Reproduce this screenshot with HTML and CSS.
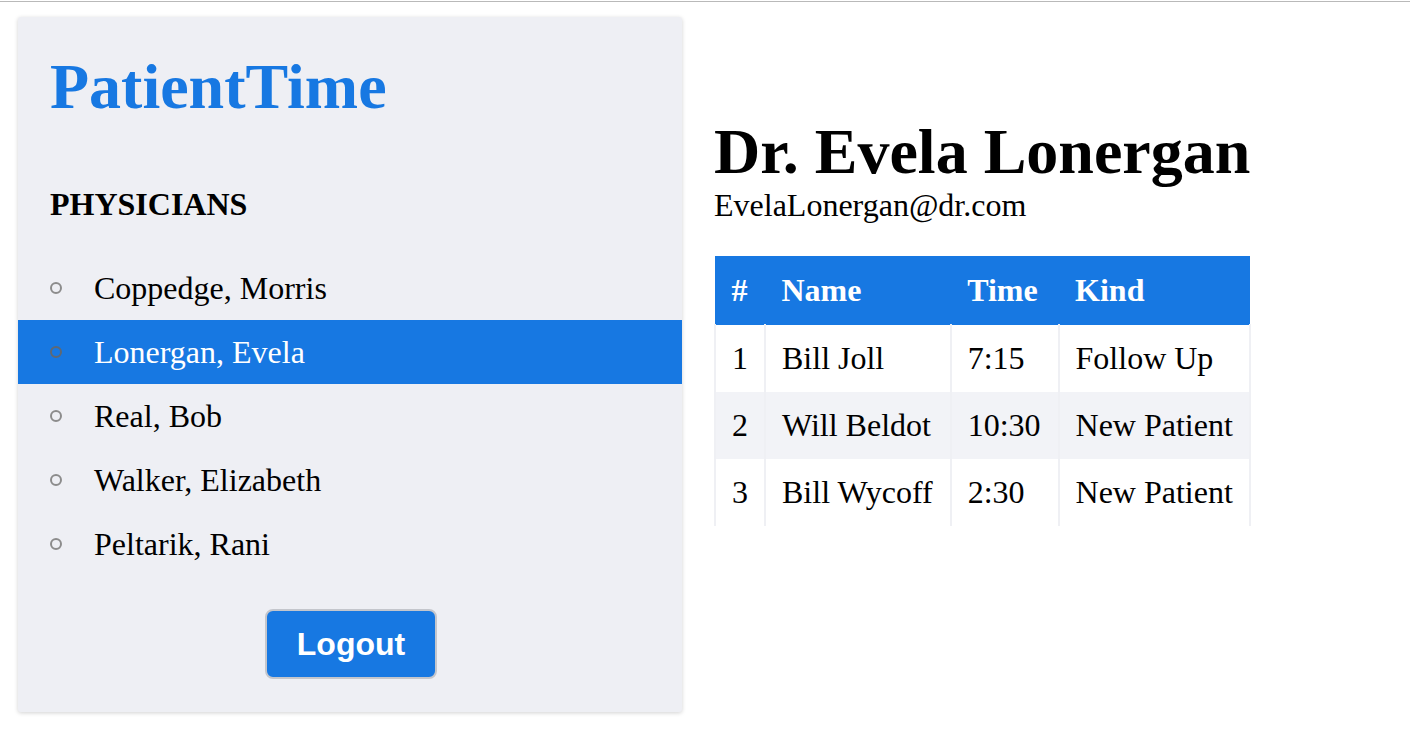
FILE: index.html
```html
<!DOCTYPE html>
<html lang="en">
<head>
<meta charset="utf-8">
<title>PatientTime</title>
<link rel="stylesheet" href="styles.css">
</head>
<body>
<div class="top-rule"></div>
<div class="layout">
  <aside class="sidebar">
    <h1 class="brand">PatientTime</h1>
    <h2 class="section-title">PHYSICIANS</h2>
    <ul class="physicians">
      <li class="physician">Coppedge, Morris</li>
      <li class="physician active">Lonergan, Evela</li>
      <li class="physician">Real, Bob</li>
      <li class="physician">Walker, Elizabeth</li>
      <li class="physician">Peltarik, Rani</li>
    </ul>
    <div class="actions">
      <button class="logout">Logout</button>
    </div>
  </aside>
  <main class="main">
    <h1 class="doctor-name">Dr. Evela Lonergan</h1>
    <div class="doctor-email">EvelaLonergan@dr.com</div>
    <table class="appointments">
      <thead>
        <tr><th>#</th><th>Name</th><th>Time</th><th>Kind</th></tr>
      </thead>
      <tbody>
        <tr><td class="num">1</td><td>Bill Joll</td><td>7:15</td><td>Follow Up</td></tr>
        <tr><td class="num">2</td><td>Will Beldot</td><td>10:30</td><td>New Patient</td></tr>
        <tr><td class="num">3</td><td>Bill Wycoff</td><td>2:30</td><td>New Patient</td></tr>
      </tbody>
    </table>
  </main>
</div>
</body>
</html>
```

FILE: styles.css
```css
html, body {
  margin: 0;
  padding: 0;
  background: #ffffff;
  font-family: "Liberation Serif", "Times New Roman", serif;
  color: #000;
}

.top-rule {
  margin-top: 1px;
  height: 1px;
  background: #b9b9b9;
}

.layout {
  display: flex;
  align-items: flex-start;
  gap: 32px;
  padding: 15px 18px;
}

.sidebar {
  width: 664px;
  box-sizing: border-box;
  background: #eeeff4;
  border-radius: 3px;
  box-shadow: 0 1px 4px rgba(0, 0, 0, 0.18);
  padding: 34px 0 33px;
}

.brand {
  margin: 0 0 0 32px;
  font-size: 64px;
  line-height: 71px;
  font-weight: bold;
  color: #1778e2;
}

.section-title {
  margin: 65px 0 0 32px;
  font-size: 32px;
  line-height: 35px;
  font-weight: bold;
}

.physicians {
  list-style: none;
  margin: 34px 0 0;
  padding: 0;
}

.physician {
  display: flex;
  align-items: center;
  height: 64px;
  padding-left: 32px;
  font-size: 32px;
  line-height: 35px;
}

.physician::before {
  content: "";
  width: 8px;
  height: 8px;
  border: 2px solid #8c8c8c;
  border-radius: 50%;
  margin-right: 32px;
  flex: none;
}

.physician.active {
  background: #1778e2;
  color: #ffffff;
}

.physician.active::before {
  border-color: #5f6873;
}

.actions {
  display: flex;
  justify-content: center;
  margin-top: 33px;
}

.logout {
  width: 172px;
  height: 70px;
  margin-left: 2px;
  background: #1778e2;
  color: #ffffff;
  border: 2px solid #c4c6cc;
  border-radius: 8px;
  font-family: "Liberation Sans", Arial, sans-serif;
  font-weight: bold;
  font-size: 32px;
  padding: 0;
}

.main {
  padding-top: 99px;
}

.doctor-name {
  margin: 0;
  font-size: 64px;
  line-height: 71px;
  font-weight: bold;
}

.doctor-email {
  font-size: 32px;
  line-height: 36px;
}

.appointments {
  margin-top: 33px;
  border-collapse: collapse;
  font-size: 32px;
}

.appointments th,
.appointments td {
  padding: 16px 17px 16px 16px;
  line-height: 35px;
  text-align: left;
}

.appointments th:first-child,
.appointments td:first-child,
.appointments th:last-child,
.appointments td:last-child {
  padding-right: 16px;
}

.appointments th {
  background: #1778e2;
  color: #ffffff;
  font-weight: bold;
  border: 1px solid #1778e2;
}

.appointments td {
  border-left: 2px solid #eff0f4;
  border-right: 2px solid #eff0f4;
}

.appointments td.num {
  text-align: center;
}

.appointments tbody tr:nth-child(even) td {
  background: #f2f3f7;
}
```
